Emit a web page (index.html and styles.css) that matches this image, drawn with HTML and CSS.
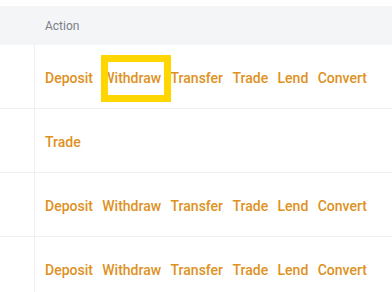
FILE: index.html
```html
<!DOCTYPE html>
<html>
<head>
<meta charset="utf-8">
<link rel="stylesheet" href="styles.css">
</head>
<body>
<div class="table">
  <div class="thead">
    <div class="cell-first"></div>
    <div class="cell-action head-label">Action</div>
  </div>
  <div class="row">
    <div class="cell-first"></div>
    <div class="cell-action links">
      <a>Deposit</a><a>Withdraw</a><a>Transfer</a><a>Trade</a><a>Lend</a><a>Convert</a>
    </div>
  </div>
  <div class="row">
    <div class="cell-first"></div>
    <div class="cell-action links">
      <a>Trade</a>
    </div>
  </div>
  <div class="row">
    <div class="cell-first"></div>
    <div class="cell-action links">
      <a>Deposit</a><a>Withdraw</a><a>Transfer</a><a>Trade</a><a>Lend</a><a>Convert</a>
    </div>
  </div>
  <div class="row">
    <div class="cell-first"></div>
    <div class="cell-action links">
      <a>Deposit</a><a>Withdraw</a><a>Transfer</a><a>Trade</a><a>Lend</a><a>Convert</a>
    </div>
  </div>
</div>
<div class="highlight"></div>
</body>
</html>
```
FILE: styles.css
```css
html, body {
  margin: 0;
  padding: 0;
  background: #ffffff;
  font-family: Roboto, "Liberation Sans", sans-serif;
  overflow: hidden;
}
body {
  position: relative;
  width: 392px;
  height: 292px;
}
.table {
  padding-top: 6px;
}
.thead {
  display: flex;
  height: 39px;
  background: #f4f5f7;
}
.row {
  display: flex;
  height: 63px;
  border-bottom: 1px solid #eef0f2;
}
.cell-first {
  width: 34px;
  flex: none;
}
.row .cell-first {
  border-right: 1px solid #eef0f2;
}
.cell-action {
  display: flex;
  align-items: center;
  padding-left: 11px;
}
.head-label {
  font-size: 12px;
  color: #7a7f88;
}
.links {
  gap: 9.4px;
  padding-left: 10px;
  padding-top: 2px;
}
.links a {
  font-size: 14px;
  font-weight: 500;
  color: #de911e;
  white-space: nowrap;
}
.highlight {
  position: absolute;
  left: 101px;
  top: 55px;
  width: 56px;
  height: 33px;
  border: 7px solid #ffd600;
}
```
